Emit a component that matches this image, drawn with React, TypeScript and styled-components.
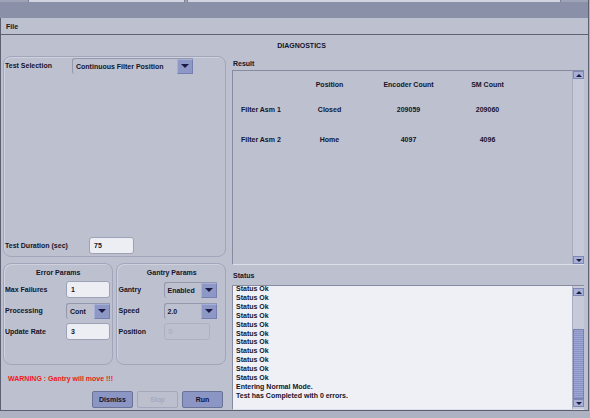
import React from "react";
import styled, { createGlobalStyle } from "styled-components";

const GlobalStyle = createGlobalStyle`
  html, body {
    margin: 0;
    padding: 0;
    background: #aeb2c2;
  }
  body {
    font-family: "Liberation Sans", Arial, sans-serif;
    font-size: 7px;
    font-weight: bold;
    color: #14142a;
  }
  #root {
    width: 590px;
    height: 418px;
    overflow: hidden;
  }
`;

const Frame = styled.div`
  width: 589px;
  height: 411px;
  box-sizing: border-box;
  border-right: 1px solid #5c6072;
  border-bottom: 1px solid #5c6072;
  background: #bdc0cf;
  display: flex;
  flex-direction: column;
`;

const TabStrip = styled.div`
  height: 2px;
  display: flex;
  background: #9ea3b8;
`;

const Tab = styled.div<{ $w: number }>`
  width: ${(p) => p.$w}px;
  margin-left: 2px;
  background: #d2d5e0;
  border-left: 1px solid #7c8094;
  border-right: 1px solid #7c8094;
`;

const TitleBand = styled.div`
  height: 16px;
  background: #8a90a8;
`;

const Window = styled.div`
  flex: 1;
  display: flex;
  flex-direction: column;
  border-left: 1px solid #5c6072;
  min-height: 0;
`;

const MenuBar = styled.div`
  height: 16px;
  display: flex;
  align-items: center;
  padding-left: 5px;
  border-bottom: 1px solid #5e6274;
`;

const Heading = styled.div`
  height: 20px;
  display: flex;
  align-items: center;
  justify-content: center;
  padding-left: 14px;
`;

const Main = styled.div`
  flex: 1;
  display: flex;
  gap: 6px;
  padding: 1px 4px 0 2px;
  min-height: 0;
`;

const LeftColumn = styled.div`
  width: 223px;
  display: flex;
  flex-direction: column;
`;

const RightColumn = styled.div`
  flex: 1;
  display: flex;
  flex-direction: column;
  min-width: 0;
`;

const Panel = styled.div<{ $w?: number; $h: number }>`
  box-sizing: border-box;
  width: ${(p) => (p.$w ? `${p.$w}px` : "100%")};
  height: ${(p) => p.$h}px;
  border: 1px solid #a2a6ba;
  border-radius: 8px;
  box-shadow: inset 1px 1px 0 #cfd2de;
`;

const TestPanel = styled(Panel)`
  display: flex;
  flex-direction: column;
  justify-content: space-between;
  padding: 0 0 2px 1px;
`;

const ParamPanel = styled(Panel)<{ $pad: number }>`
  display: flex;
  flex-direction: column;
  gap: 4px;
  padding: 0 0 0 ${(p) => p.$pad}px;
`;

const PanelTitle = styled.div`
  height: 17px;
  display: flex;
  align-items: center;
  justify-content: center;
  margin-bottom: -4px;
`;

const ParamsRow = styled.div`
  display: flex;
  gap: 3px;
  margin-top: 6px;
`;

const Row = styled.div`
  display: flex;
  align-items: center;
  min-height: 17px;
`;

const Label = styled.span<{ $w: number }>`
  width: ${(p) => p.$w}px;
  flex-shrink: 0;
`;

const Field = styled.div<{ $w: number; $disabled?: boolean }>`
  box-sizing: border-box;
  width: ${(p) => p.$w}px;
  height: 17px;
  display: flex;
  align-items: center;
  padding-left: 4px;
  border: 1px solid ${(p) => (p.$disabled ? "#acb0c2" : "#9ea2b6")};
  border-radius: 3px;
  background: ${(p) => (p.$disabled ? "transparent" : "#eceef4")};
  color: ${(p) => (p.$disabled ? "#a2a6b8" : "#14142a")};
  font-weight: ${(p) => (p.$disabled ? "normal" : "bold")};
`;

const Combo = styled.div<{ $w: number }>`
  box-sizing: border-box;
  width: ${(p) => p.$w}px;
  height: 16px;
  display: flex;
  border-top: 1px solid #9498ac;
  border-left: 1px solid #9498ac;
  border-radius: 3px 0 0 3px;
`;

const ComboText = styled.div`
  flex: 1;
  display: flex;
  align-items: center;
  padding-left: 3px;
  white-space: nowrap;
  overflow: hidden;
`;

const ComboArrow = styled.div`
  width: 16px;
  display: flex;
  align-items: center;
  justify-content: center;
  background: #8d98c6;
  border: 1px solid #7580b0;
  border-top-color: #a8b0d8;
  border-left-color: #a8b0d8;
  box-sizing: border-box;
`;

const Triangle = styled.span<{ $up?: boolean; $size: number }>`
  width: 0;
  height: 0;
  border-left: ${(p) => p.$size}px solid transparent;
  border-right: ${(p) => p.$size}px solid transparent;
  ${(p) =>
    p.$up
      ? `border-bottom: ${p.$size}px solid #1a1a44;`
      : `border-top: ${p.$size}px solid #1a1a44;`}
`;

const Warning = styled.div`
  color: #f01818;
  margin: 9px 0 0 5px;
  line-height: 9px;
`;

const ButtonRow = styled.div`
  display: flex;
  justify-content: flex-end;
  gap: 4px;
  margin-top: 8px;
  padding-right: 3px;
`;

const Button = styled.div<{ $disabled?: boolean }>`
  box-sizing: border-box;
  width: 41px;
  height: 17px;
  display: flex;
  align-items: center;
  justify-content: center;
  border: 1px solid ${(p) => (p.$disabled ? "#a4a8ba" : "#6a7298")};
  border-radius: 2px;
  background: ${(p) => (p.$disabled ? "#bbbfce" : "#8c96c4")};
  color: ${(p) => (p.$disabled ? "#9da1b2" : "#121230")};
  font-weight: ${(p) => (p.$disabled ? "normal" : "bold")};
`;

const SectionLabel = styled.div<{ $h: number }>`
  height: ${(p) => p.$h}px;
  display: flex;
  align-items: center;
  padding-left: 1px;
`;

const Box = styled.div<{ $h?: number; $bg: string }>`
  ${(p) => (p.$h ? `height: ${p.$h}px;` : "flex: 1;")}
  display: flex;
  background: ${(p) => p.$bg};
  border-top: 1px solid #878ba0;
  border-left: 1px solid #878ba0;
  border-bottom: 1px solid #dcdee8;
  box-sizing: border-box;
  min-height: 0;
`;

const Viewport = styled.div`
  flex: 1;
  overflow: hidden;
`;

const TableRow = styled.div<{ $mt: number }>`
  display: grid;
  grid-template-columns: 57px 79px 79px 79px;
  height: 10px;
  align-items: center;
  margin-top: ${(p) => p.$mt}px;
`;

const Cell = styled.div<{ $first?: boolean }>`
  text-align: ${(p) => (p.$first ? "left" : "center")};
  padding-left: ${(p) => (p.$first ? "8px" : "0")};
  white-space: nowrap;
`;

const Log = styled.div`
  padding-left: 3px;
  margin-top: -1px;
  line-height: 8.9px;
`;

const ScrollBar = styled.div<{ $pad: number }>`
  width: 12px;
  display: flex;
  flex-direction: column;
  padding: ${(p) => p.$pad}px 0;
  box-sizing: border-box;
  background: #c6c9d7;
  border-left: 1px solid #a8acbe;
`;

const ScrollButton = styled.div`
  height: 8px;
  display: flex;
  align-items: center;
  justify-content: center;
  background: #a9b0d6;
  border: 1px solid #7d86b6;
  box-sizing: border-box;
`;

const Track = styled.div`
  flex: 1;
  display: flex;
  flex-direction: column;
  justify-content: flex-end;
`;

const Thumb = styled.div<{ $h: number }>`
  height: ${(p) => p.$h}px;
  box-sizing: border-box;
  border: 1px solid #7880b4;
  background: repeating-linear-gradient(
    to bottom,
    #9ea6d4 0px,
    #9ea6d4 1px,
    #8b93c6 1px,
    #8b93c6 2px
  );
`;

const Scroll: React.FC<{ pad: number; thumb?: number }> = ({ pad, thumb }) => (
  <ScrollBar $pad={pad}>
    <ScrollButton>
      <Triangle $up $size={3} />
    </ScrollButton>
    <Track>{thumb ? <Thumb $h={thumb} /> : null}</Track>
    <ScrollButton>
      <Triangle $size={3} />
    </ScrollButton>
  </ScrollBar>
);

const Select: React.FC<{ w: number; value: string }> = ({ w, value }) => (
  <Combo $w={w}>
    <ComboText>{value}</ComboText>
    <ComboArrow>
      <Triangle $size={4} />
    </ComboArrow>
  </Combo>
);

const results = [
  { name: "Filter Asm 1", pos: "Closed", enc: "209059", sm: "209060", mt: 15 },
  { name: "Filter Asm 2", pos: "Home", enc: "4097", sm: "4096", mt: 20 },
];

const statusLines = [
  ...Array.from({ length: 11 }, () => "Status Ok"),
  "Entering Normal Mode.",
  "Test has Completed with 0 errors.",
];

export default function App() {
  return (
    <>
      <GlobalStyle />
      <Frame>
        <TabStrip>
          <Tab $w={155} style={{ marginLeft: 28 }} />
          <Tab $w={372} />
        </TabStrip>
        <TitleBand />
        <Window>
          <MenuBar>File</MenuBar>
          <Heading>DIAGNOSTICS</Heading>
          <Main>
            <LeftColumn>
              <TestPanel $h={201}>
                <Row>
                  <Label $w={67}>Test Selection</Label>
                  <Select w={121} value="Continuous Filter Position" />
                </Row>
                <Row>
                  <Label $w={84}>Test Duration (sec)</Label>
                  <Field $w={45}>75</Field>
                </Row>
              </TestPanel>

              <ParamsRow>
                <ParamPanel $w={110} $h={102} $pad={1}>
                  <PanelTitle>Error Params</PanelTitle>
                  <Row>
                    <Label $w={61}>Max Failures</Label>
                    <Field $w={44}>1</Field>
                  </Row>
                  <Row>
                    <Label $w={61}>Processing</Label>
                    <Select w={44} value="Cont" />
                  </Row>
                  <Row>
                    <Label $w={61}>Update Rate</Label>
                    <Field $w={44}>3</Field>
                  </Row>
                </ParamPanel>
                <ParamPanel $w={111} $h={102} $pad={2}>
                  <PanelTitle>Gantry Params</PanelTitle>
                  <Row>
                    <Label $w={45}>Gantry</Label>
                    <Select w={53} value="Enabled" />
                  </Row>
                  <Row>
                    <Label $w={45}>Speed</Label>
                    <Select w={53} value="2.0" />
                  </Row>
                  <Row>
                    <Label $w={45}>Position</Label>
                    <Field $w={46} $disabled>
                      0
                    </Field>
                  </Row>
                </ParamPanel>
              </ParamsRow>

              <Warning>WARNING : Gantry will move !!!</Warning>

              <ButtonRow>
                <Button>Dismiss</Button>
                <Button $disabled>Stop</Button>
                <Button>Run</Button>
              </ButtonRow>
            </LeftColumn>

            <RightColumn>
              <SectionLabel $h={14}>Result</SectionLabel>
              <Box $h={195} $bg="#bdc0cf">
                <Viewport>
                  <TableRow $mt={8}>
                    <Cell $first />
                    <Cell>Position</Cell>
                    <Cell>Encoder Count</Cell>
                    <Cell>SM Count</Cell>
                  </TableRow>
                  {results.map((r) => (
                    <TableRow key={r.name} $mt={r.mt}>
                      <Cell $first>{r.name}</Cell>
                      <Cell>{r.pos}</Cell>
                      <Cell>{r.enc}</Cell>
                      <Cell>{r.sm}</Cell>
                    </TableRow>
                  ))}
                </Viewport>
                <Scroll pad={0} />
              </Box>

              <SectionLabel $h={20}>Status</SectionLabel>
              <Box $bg="#eef0f6">
                <Viewport>
                  <Log>
                    {statusLines.map((line, i) => (
                      <div key={i}>{line}</div>
                    ))}
                  </Log>
                </Viewport>
                <Scroll pad={2} thumb={70} />
              </Box>
            </RightColumn>
          </Main>
        </Window>
      </Frame>
    </>
  );
}
